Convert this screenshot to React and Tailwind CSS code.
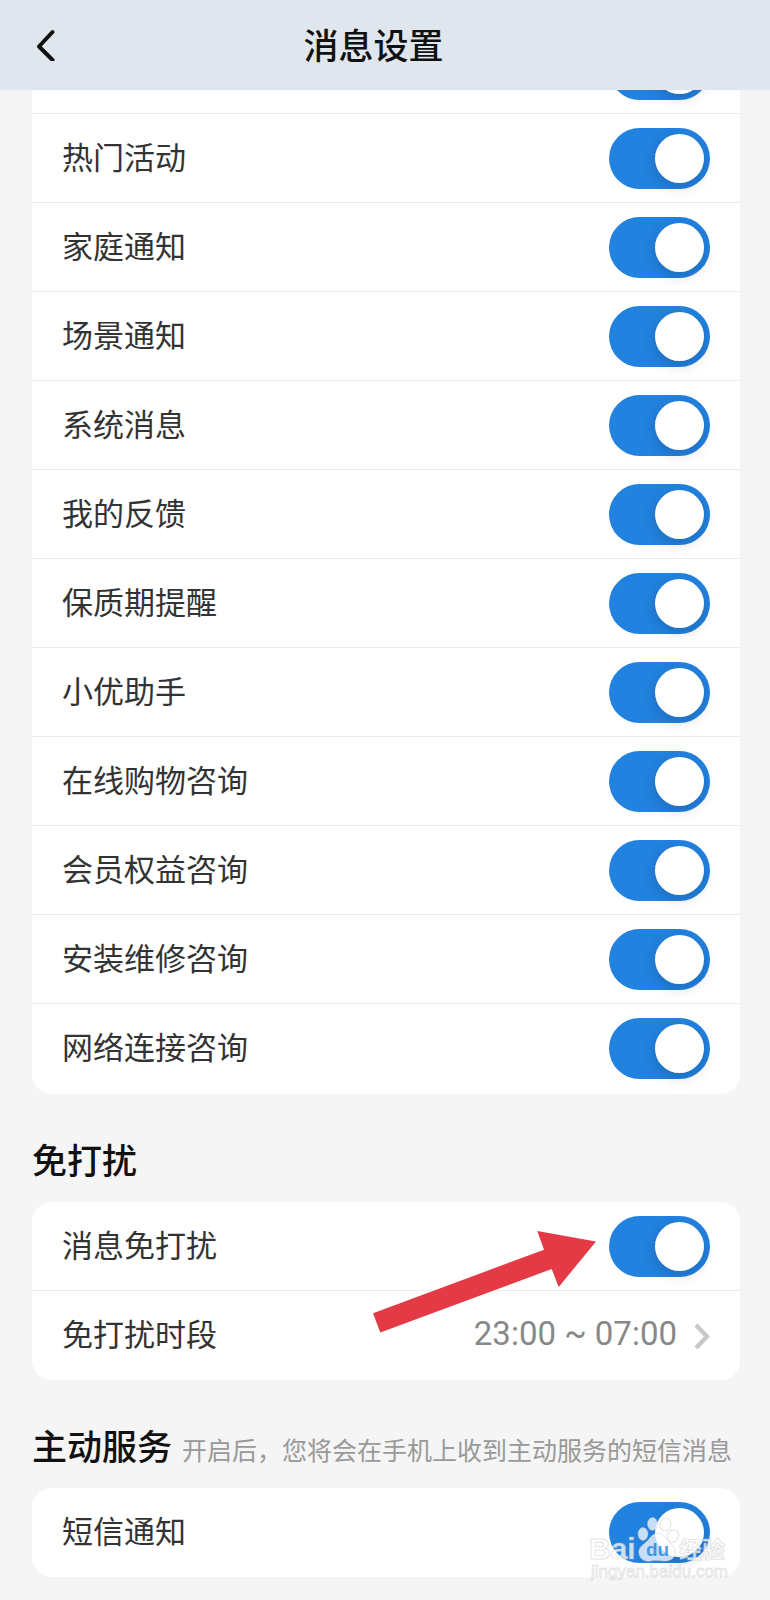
import React, { useState } from "react";

const messageTypes = [
  "热门活动",
  "家庭通知",
  "场景通知",
  "系统消息",
  "我的反馈",
  "保质期提醒",
  "小优助手",
  "在线购物咨询",
  "会员权益咨询",
  "安装维修咨询",
  "网络连接咨询",
];

function Toggle({ id, label }) {
  const [on, setOn] = useState(true);

  return (
    <input
      id={id}
      type="checkbox"
      role="switch"
      aria-label={label}
      checked={on}
      onChange={(e) => setOn(e.target.checked)}
      className="flex h-[61px] w-[101px] shrink-0 cursor-pointer appearance-none items-center rounded-full bg-gray-300 px-[6px] before:size-[49px] before:rounded-full before:bg-white before:shadow-[0_4px_14px_rgba(0,0,0,0.18)] checked:justify-end checked:bg-[#2282e0]"
    />
  );
}

function SwitchRow({ id, label }) {
  return (
    <li className="flex h-[89px] items-center justify-between border-b border-[#ececec] px-[30px] last:border-b-0">
      <label
        htmlFor={id}
        className="pb-[5px] text-[31px] leading-[40px] text-[#333]"
      >
        {label}
      </label>
      <Toggle id={id} />
    </li>
  );
}

function SectionHeader({ title, note }) {
  return (
    <div className="flex h-[108px] items-baseline gap-[10px] whitespace-nowrap pt-10">
      <h2 className="text-[35px] font-medium leading-[50px] text-[#111]">
        {title}
      </h2>
      {note && <p className="text-[25px] text-[#999]">{note}</p>}
    </div>
  );
}

function Arrow() {
  return (
    <svg
      viewBox="0 0 223 102"
      className="pointer-events-none absolute right-36 top-[29px] h-[102px] w-[223px]"
      aria-hidden="true"
    >
      <polygon
        points="223,10.5 164.3,0 171,18.7 0,82.3 7.3,101.5 178.7,38 185.7,56"
        fill="#e33a45"
      />
    </svg>
  );
}

function Watermark() {
  return (
    <svg
      viewBox="0 0 142 70"
      className="pointer-events-none absolute right-[10px] top-[28px] h-[70px] w-[142px] overflow-visible"
      fill="#fff"
      fillOpacity="0.75"
      stroke="#bbb"
      strokeOpacity="0.4"
      strokeWidth="1"
      fontFamily="Liberation Sans, Noto Sans CJK SC, sans-serif"
      aria-hidden="true"
    >
      <text x="1" y="43" fontSize="30" fontWeight="bold">
        Bai
      </text>
      <ellipse cx="55" cy="18" rx="5" ry="6.5" />
      <ellipse cx="64.5" cy="8" rx="5" ry="6.5" />
      <ellipse cx="77.5" cy="8.5" rx="5.5" ry="6.5" transform="rotate(12 77.5 8.5)" />
      <ellipse cx="85" cy="20" rx="5.5" ry="6.5" transform="rotate(25 85 20)" />
      <path d="M70 17c5 0 8 6 12 10 4 3 6 6 5 11-1 5-5 7-10 7-4 0-10-1-14 0-5 1-11-1-12-7-1-5 2-8 6-11 5-4 7-10 13-10z" />
      <text
        x="58"
        y="40"
        fontSize="19"
        fontWeight="bold"
        fill="#2282e0"
        fillOpacity="0.8"
        stroke="none"
      >
        du
      </text>
      <text x="91" y="42" fontSize="23" fontWeight="bold">
        经验
      </text>
      <text x="3" y="61" fontSize="17">
        jingyan.baidu.com
      </text>
    </svg>
  );
}

function App() {
  return (
    <div className="min-h-screen bg-[#f5f5f5] font-['Noto_Sans_CJK_SC',sans-serif]">
      <header className="sticky top-0 z-10 grid h-[90px] grid-cols-[1fr_auto_1fr] items-center bg-[#e0e6ed] pl-[30px] pr-[53px]">
        <button
          type="button"
          aria-label="返回"
          className="flex size-8 items-center justify-center"
        >
          <svg
            viewBox="0 0 32 32"
            className="size-8"
            fill="none"
            stroke="#111"
            strokeWidth="4"
            strokeLinecap="round"
            strokeLinejoin="round"
          >
            <path d="M22.5 3 9 17.5 22.5 31" />
          </svg>
        </button>
        <h1 className="pb-[3px] text-[35px] font-medium leading-[50px] text-[#111]">
          消息设置
        </h1>
      </header>

      <main className="pb-[21px] pl-8 pr-[30px]">
        <div className="overflow-hidden rounded-b-[20px] bg-white pb-px">
          {/* row scrolled under the header */}
          <div className="flex h-6 flex-col justify-end overflow-hidden">
            <div className="flex h-[89px] shrink-0 items-center justify-end border-b border-[#ececec] px-[30px]">
              <Toggle id="other" label="其他消息" />
            </div>
          </div>
          <ul>
            {messageTypes.map((label, i) => (
              <SwitchRow key={label} id={`message-${i}`} label={label} />
            ))}
          </ul>
        </div>

        <section>
          <SectionHeader title="免打扰" />
          <div className="relative rounded-[20px] bg-white">
            <ul>
              <li className="flex h-[89px] items-center justify-between border-b border-[#ececec] px-[30px]">
                <label
                  htmlFor="dnd"
                  className="pb-[5px] text-[31px] leading-[40px] text-[#333]"
                >
                  消息免打扰
                </label>
                <Toggle id="dnd" />
              </li>
              <li>
                <button
                  type="button"
                  className="flex h-[89px] w-full items-center justify-between px-[30px]"
                >
                  <span className="pb-[5px] text-[31px] leading-[40px] text-[#333]">
                    免打扰时段
                  </span>
                  <span className="flex items-center gap-[17px] text-[#888]">
                    <span className="pb-[3px] font-[Roboto,sans-serif] text-[33px] leading-[40px]">
                      23:00 ~ 07:00
                    </span>
                    <svg
                      viewBox="0 0 16 28"
                      className="h-7 w-4"
                      fill="none"
                      stroke="#c8c8c8"
                      strokeWidth="4.5"
                    >
                      <path d="M2 3 13 14.5 2 26" />
                    </svg>
                  </span>
                </button>
              </li>
            </ul>
            <Arrow />
          </div>
        </section>

        <section>
          <SectionHeader
            title="主动服务"
            note="开启后，您将会在手机上收到主动服务的短信消息"
          />
          <div className="relative rounded-[20px] bg-white">
            <ul>
              <SwitchRow id="sms" label="短信通知" />
            </ul>
            <Watermark />
          </div>
        </section>
      </main>
    </div>
  );
}

export default App;
